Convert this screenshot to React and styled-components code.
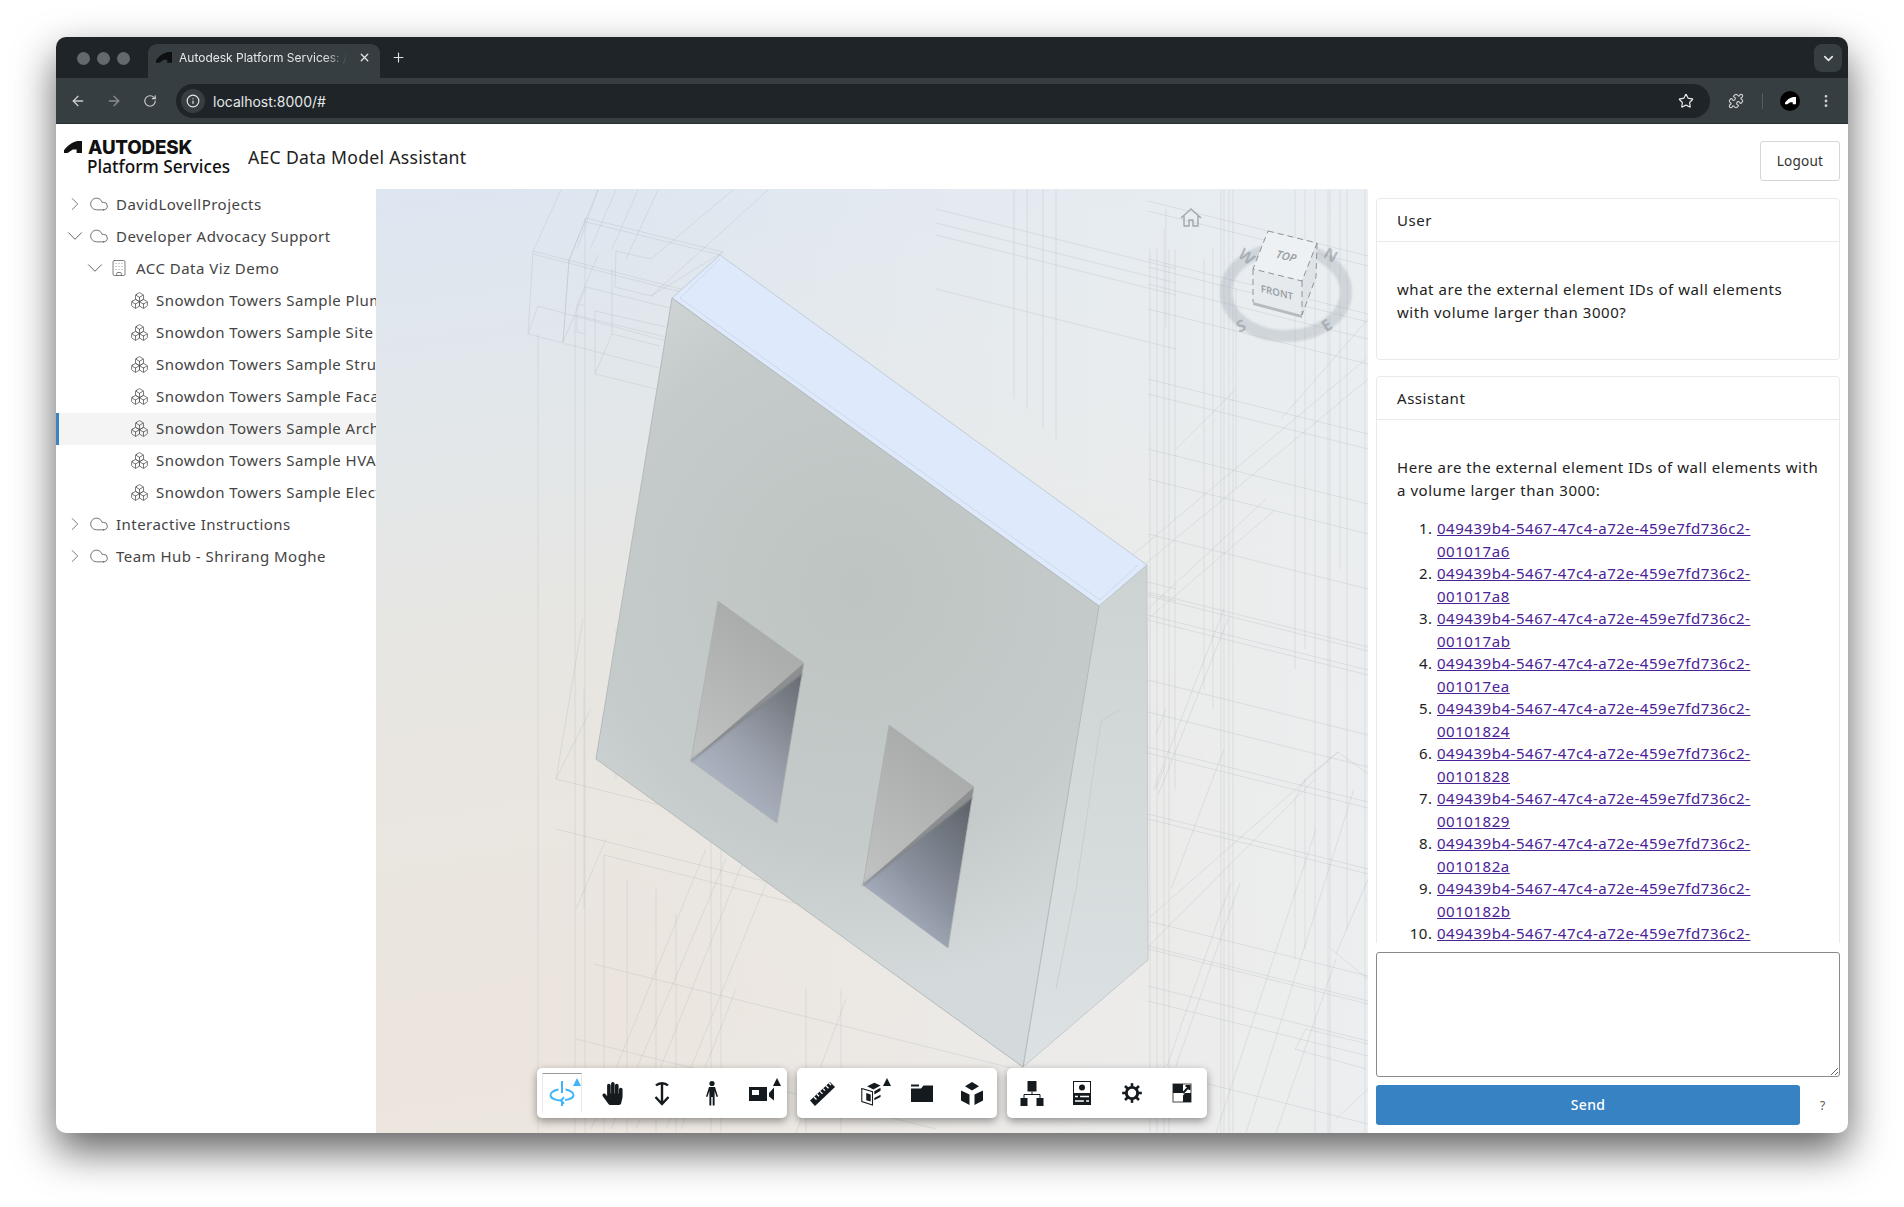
import React from "react"
import styled, { createGlobalStyle } from "styled-components"
import {
  ArrowLeft,
  ArrowRight,
  Boxes,
  Building,
  ChevronDown,
  ChevronRight,
  Cloud,
  Info,
  MoreVertical,
  Plus,
  Puzzle,
  RotateCw,
  Star,
  X,
} from "lucide-react"
import { FaHandPaper } from "react-icons/fa"

const GlobalStyle = createGlobalStyle`
  html, body { margin: 0; padding: 0; background: #fff; }
  body { font-family: "Noto Sans", sans-serif; color: #222; }
  * { box-sizing: border-box; }
`

const Page = styled.div`
  width: 1904px;
  height: 1207px;
  padding: 37px 56px 74px;
  overflow: hidden;
`

const BrowserWindow = styled.div`
  height: 1096px;
  display: flex;
  flex-direction: column;
  border-radius: 10px;
  overflow: hidden;
  background: #fff;
  box-shadow: 0 18px 42px rgba(0, 0, 0, 0.62);
`

const TabStrip = styled.div`
  height: 41px;
  flex: none;
  display: flex;
  align-items: flex-end;
  background: #1e2427;
  padding: 0 6px 0 21px;
`

const Lights = styled.div`
  display: flex;
  gap: 7px;
  align-self: center;
  margin: 1px 18px 0 0;
`

const Light = styled.span`
  width: 13px;
  height: 13px;
  border-radius: 50%;
  background: #63696c;
`

const Tab = styled.div`
  width: 232px;
  height: 34px;
  display: flex;
  align-items: center;
  gap: 7px;
  padding: 0 9px 7px 8px;
  background: #373e41;
  border-radius: 9px 9px 0 0;
  color: #e4e7e8;
`

const TabTitle = styled.span`
  flex: 1;
  overflow: hidden;
  white-space: nowrap;
  font: 400 12px "Inter", sans-serif;
  mask-image: linear-gradient(90deg, #000 84%, transparent 98%);
`

const NewTab = styled.span`
  display: flex;
  align-self: center;
  margin: 0 0 0 11px;
  color: #dfe3e4;
`

const TabMenu = styled.span`
  margin-left: auto;
  align-self: flex-start;
  margin-top: 7px;
  width: 28px;
  height: 28px;
  display: flex;
  align-items: center;
  justify-content: center;
  border-radius: 8px;
  background: #373e41;
  color: #e4e7e8;
`

const AddressBar = styled.div`
  height: 46px;
  flex: none;
  display: flex;
  align-items: center;
  padding: 1px 14px 0 12px;
  background: #373e41;
  border-bottom: 1px solid #2a2f32;
  color: #c9cecf;
`

const NavButton = styled.span`
  width: 20px;
  display: flex;
  justify-content: center;
  margin-right: 16px;
  opacity: ${p => (p.$dim ? 0.55 : 1)};
`

const UrlPill = styled.div`
  width: 1534px;
  height: 34px;
  display: flex;
  align-items: center;
  padding: 0 16px 0 5px;
  border-radius: 17px;
  background: #1e2427;
  color: #e6e8e9;
`

const SiteInfo = styled.span`
  width: 24px;
  height: 24px;
  display: flex;
  align-items: center;
  justify-content: center;
  border-radius: 50%;
  background: #373e41;
`

const UrlText = styled.span`
  flex: 1;
  margin-left: 8px;
  font: 400 14px "Inter", sans-serif;
`

const AddressActions = styled.div`
  display: flex;
  align-items: center;
  flex: 1;
  justify-content: space-between;
  padding: 0 0 0 18px;
`

const Divider = styled.span`
  width: 1px;
  height: 16px;
  background: #555c5f;
`

const Avatar = styled.span`
  width: 20px;
  height: 20px;
  border-radius: 50%;
  background: #000;
  display: flex;
  align-items: center;
  justify-content: center;
`

const AppHeader = styled.header`
  height: 65px;
  flex: none;
  display: flex;
  align-items: center;
  padding: 0 8px 0 8px;
`

const Brand = styled.div`
  display: flex;
  flex-direction: column;
  margin-top: 2px;
  width: 184px;
`

const BrandTop = styled.div`
  display: flex;
  align-items: center;
  gap: 6px;
  height: 17px;
  margin-bottom: 1px;
  font: 800 18.8px/17px "Inter", sans-serif;
  letter-spacing: -0.2px;
  color: #111;
`

const BrandBottom = styled.div`
  margin-left: 23px;
  font: 500 17.2px/19px "Noto Sans", sans-serif;
  color: #111;
  white-space: nowrap;
`

const AppTitle = styled.h1`
  margin: 0;
  font: 400 17.6px "Noto Sans", sans-serif;
  letter-spacing: 0.3px;
  color: #222;
`

const LogoutButton = styled.button`
  margin: 8px 0 0 auto;
  width: 80px;
  height: 40px;
  background: #fff;
  border: 1px solid #d5d6db;
  border-radius: 3px;
  font: 400 13.6px "Noto Sans", sans-serif;
  letter-spacing: 0.2px;
  color: #333;
`

const AppBody = styled.div`
  flex: 1;
  min-height: 0;
  display: flex;
`

const Sidebar = styled.nav`
  width: 320px;
  flex: none;
  overflow: hidden;
`

const TreeRow = styled.div`
  height: 32px;
  display: flex;
  align-items: center;
  padding: 0 0 2px ${p => 11 + p.$level * 20}px;
  white-space: nowrap;
  font-size: 15px;
  letter-spacing: 0.47px;
  color: #444;
  background: ${p => (p.$selected ? "#f4f4f5" : "transparent")};
  box-shadow: ${p => (p.$selected ? "inset 3px 0 0 #3c83c3" : "none")};
`

const Caret = styled.span`
  width: 16px;
  flex: none;
  display: flex;
  justify-content: center;
  margin-right: 4px;
  color: #555;
  svg {
    flex: none;
  }
`

const TreeIcon = styled.span`
  width: 24px;
  flex: none;
  display: flex;
  justify-content: center;
  margin-right: 5px;
  color: #555;
`

const Leaf = styled.span`
  width: 20px;
  flex: none;
`

const Viewer = styled.main`
  width: 992px;
  flex: none;
  position: relative;
  overflow: hidden;
  background:
    linear-gradient(90deg, rgba(236, 240, 243, 0) 25%, rgba(236, 240, 243, 0.8) 100%),
    linear-gradient(172deg, #dde6f1 0%, #e2e7ea 22%, #e8e6e1 46%, #ece5de 80%, #ece7e1 100%);
`

const Scene = styled.svg`
  display: block;
  width: 992px;
  height: 944px;
`

const ToolDock = styled.div`
  position: absolute;
  left: 161px;
  bottom: 15px;
  display: flex;
  gap: 10px;
`

const ToolGroup = styled.div`
  display: flex;
  height: 50px;
  background: #fff;
  border-radius: 5px;
  box-shadow: 0 3px 9px rgba(0, 0, 0, 0.4);
`

const ToolButton = styled.div`
  position: relative;
  width: 40px;
  height: 40px;
  margin: 5px;
  display: flex;
  align-items: center;
  justify-content: center;
  color: ${p => (p.$active ? "#3fb4fb" : "#151a1e")};
  border: 1px solid transparent;
  border-top-color: ${p => (p.$active ? "#9a9a9a" : "transparent")};
  border-left-color: ${p => (p.$active ? "#e8e8e8" : "transparent")};
  border-right-color: ${p => (p.$active ? "#e8e8e8" : "transparent")};
`

const MoreMark = styled.span`
  position: absolute;
  top: 4px;
  right: 0;
  width: 0;
  height: 0;
  border-left: 4px solid transparent;
  border-right: 4px solid transparent;
  border-bottom: 8px solid currentColor;
`

const ChatPanel = styled.aside`
  flex: 1;
  min-width: 0;
  display: flex;
  flex-direction: column;
  padding: 9px 8px 8px;
`

const Messages = styled.div`
  flex: 1;
  min-height: 0;
  overflow: hidden;
  display: flex;
  flex-direction: column;
  gap: 16px;
`

const MessageCard = styled.section`
  flex: none;
  border: 1px solid #e9e9ec;
  border-radius: 4px;
  font-size: 15px;
  letter-spacing: 0.54px;
  line-height: 22.5px;
  color: #222;
`

const CardTitle = styled.div`
  height: 43px;
  display: flex;
  align-items: center;
  padding: 0 20px;
  border-bottom: 1px solid #e9e9ec;
`

const CardBody = styled.div`
  padding: 36px 20px;
`

const Paragraph = styled.p`
  margin: 0;
`

const IdList = styled.ol`
  margin: 16px 0 0;
  padding: 0 30px 0 40px;
`

const IdLink = styled.a`
  color: #4a2296;
  text-decoration: underline;
`

const PromptBox = styled.textarea`
  flex: none;
  display: block;
  width: 100%;
  height: 125px;
  margin-top: 9px;
  border: 1px solid #8a8a8a;
  border-radius: 3px;
  background: #fff;
`

const SendRow = styled.div`
  flex: none;
  display: flex;
  align-items: center;
  height: 40px;
  margin-top: 8px;
`

const SendButton = styled.button`
  width: 424px;
  height: 40px;
  padding: 0 0 2px;
  border: 0;
  border-radius: 3px;
  background: #3682c2;
  color: #fff;
  font: 500 14px "Noto Sans", sans-serif;
  letter-spacing: 0.3px;
`

const HelpMark = styled.span`
  margin-left: 20px;
  font-size: 12px;
  color: #555;
`

const AutodeskMark = ({ size = 18, color = "#111" }) => (
  <svg width={size} height={size * 0.67} viewBox="0 0 18 12">
    <path fill={color} d="M0 12V9.2C3 5 8 1.2 13.5 0H18V12H12.6V8.6H8.8L3.6 12Z" />
  </svg>
)

const iconProps = { width: 28, height: 28, viewBox: "0 0 28 28" }

const OrbitIcon = () => (
  <svg {...iconProps} fill="none" stroke="currentColor" strokeWidth="2">
    <path d="M14 2V14M14 22V27" />
    <path d="M10.5 10.5C5 11.5 2 14 2.5 16.5C3 19.5 8 21.5 13 21.5" />
    <path d="M17.5 10.5C23 11.5 26 14 25.5 16.5C25 19 21 20.5 17 21" />
    <path d="M16 18.2L13 21.5L16 24.6" />
  </svg>
)

const DollyIcon = () => (
  <svg {...iconProps} fill="none" stroke="currentColor" strokeWidth="2.4">
    <path d="M14 4V25M8 6.5C11 3.5 17 3.5 20 6.5M7.5 18L14 25L20.5 18" />
  </svg>
)

const WalkIcon = () => (
  <svg {...iconProps} fill="currentColor">
    <circle cx="14" cy="4.5" r="2.6" />
    <path d="M11 8H17L20 17.5L18.6 18L16.6 12V26.5H14.7V18H13.3V26.5H11.4V12L9.4 18L8 17.5Z" />
  </svg>
)

const CameraIcon = () => (
  <svg {...iconProps} fill="currentColor">
    <path fillRule="evenodd" d="M1 8H19V22H1ZM4 11V16H11V11Z" />
    <path d="M21 14L26 8.5V21.5L21 17.5Z" />
  </svg>
)

const RulerIcon = () => (
  <svg {...iconProps}>
    <path fill="currentColor" d="M2 21.5L22 3L27 8L7 27Z" />
    <path
      stroke="#fff"
      strokeWidth="1.3"
      d="M6 18L8.5 20.5M9 15.2L11 17.2M12 12.4L14.5 14.9M15 9.6L17 11.6M18 6.8L20.5 9.3M21 4L23 6"
    />
  </svg>
)

const SectionIcon = () => (
  <svg width="25" height="25" viewBox="0 0 28 28">
    <path fill="none" stroke="currentColor" strokeWidth="1.2" d="M2 8.5L14 12V27L2 23Z" />
    <path fill="currentColor" d="M7 13.5L12 15V23L7 21.5Z" />
    <path fill="currentColor" d="M8 6L16 2L23 5L15 9.5Z" />
    <path fill="currentColor" d="M16 11.5L23 7.5V11L16 15ZM16 19L23 15.5V18L16 21.5Z" />
  </svg>
)

const FolderIcon = () => (
  <svg {...iconProps} fill="currentColor">
    <path d="M3 5.5H11V7.5H3Z" />
    <path d="M3 9.5H13L15.5 6.5H25V23H3Z" />
  </svg>
)

const ExplodeIcon = () => (
  <svg {...iconProps} fill="currentColor">
    <path d="M14 3L21 7.2L14 11.4L7 7.2Z" />
    <path d="M3 11.5L11.5 15.5V26L3 21.5Z" />
    <path d="M25 11.5L16.5 15.5V26L25 21.5Z" />
  </svg>
)

const TreeViewIcon = () => (
  <svg {...iconProps} fill="currentColor">
    <rect x="9.5" y="2" width="9" height="10.5" />
    <rect x="2.5" y="19" width="7" height="8" />
    <rect x="18.5" y="19" width="7" height="8" />
    <path fill="none" stroke="currentColor" d="M14 12.5V15.5M6 19V15.5H22V19" />
  </svg>
)

const PropertiesIcon = () => (
  <svg {...iconProps}>
    <rect x="5.5" y="2.5" width="17" height="23" fill="none" stroke="currentColor" />
    <circle cx="14" cy="8.5" r="3" fill="currentColor" />
    <rect x="5.5" y="14" width="17" height="11.5" fill="currentColor" />
    <path stroke="#fff" strokeWidth="1.3" d="M7 17.5H21M7 22H21" />
    <path stroke="#151a1e" strokeWidth="2.2" d="M11 16V19M17 20.5V23.5" />
  </svg>
)

const GearIcon = () => (
  <svg width="24" height="24" viewBox="0 0 28 28" fill="none" stroke="currentColor">
    <circle cx="14" cy="14" r="6.6" strokeWidth="3.4" />
    {[0, 45, 90, 135, 180, 225, 270, 315].map(angle => (
      <path key={angle} d="M14 2.5V7" strokeWidth="3" transform={`rotate(${angle} 14 14)`} />
    ))}
  </svg>
)

const FullscreenIcon = () => (
  <svg {...iconProps}>
    <rect x="5" y="5" width="18" height="18" fill="#fff" stroke="#444" />
    <path fill="currentColor" d="M5 5H15V14H5ZM15 14H23V23H15Z" />
    <path fill="none" stroke="#fff" strokeWidth="2" d="M11 19L16 14" />
    <path fill="none" stroke="currentColor" strokeWidth="2" d="M15 14L21.5 7M17.5 7H21.5V11" />
  </svg>
)

// faint wireframe of the rest of the building behind the selected wall
const floorLine = (x, y, len = 220) => [x, y, x + len, y + len * 0.25]
const wireLines = [
  // roof beam and boxes, upper left
  [210, 29, 347, 63], [210, 33, 345, 66], [157, 62, 328, 106], [157, 65, 328, 109],
  [193, 71, 210, 29], [157, 62, 185, 1], [193, 71, 222, 1], [157, 62, 152, 145],
  [152, 145, 283, 179], [162, 117, 294, 153], [162, 117, 152, 145], [199, 126, 290, 148],
  [219, 122, 219, 185], [219, 185, 280, 200], [219, 122, 290, 138], [236, 145, 284, 157],
  [236, 145, 219, 185], [236, 80, 236, 145], [240, 62, 239, 98], [239, 98, 275, 107],
  [275, 107, 347, 63], [240, 62, 275, 70], [275, 70, 357, 1], [201, 116, 209, 116],
  [201, 116, 201, 143], [201, 143, 209, 145], [201, 116, 222, 66], [210, 98, 294, 119],
  [210, 98, 187, 153], [187, 153, 193, 71], [275, 107, 392, 1], [222, 1, 201, 60],
  [240, 1, 214, 60], [262, 1, 236, 60], [282, 1, 250, 70],
  // tall verticals on the left
  [162, 145, 162, 944], [199, 126, 199, 944], [209, 29, 209, 944], [193, 71, 187, 153],
  [240, 440, 240, 590], [292, 430, 292, 620],
  // verticals above and right of the wall
  [638, 1, 638, 210], [651, 1, 651, 220], [667, 1, 667, 240], [680, 1, 680, 250],
  [774, 60, 774, 944], [781, 60, 781, 944], [788, 40, 788, 944], [793, 60, 793, 944],
  [799, 60, 799, 600], [828, 70, 828, 500], [837, 60, 837, 520], [845, 1, 845, 944],
  [848, 1, 848, 944], [853, 1, 853, 944], [857, 1, 857, 944], [919, 1, 919, 480],
  [929, 1, 929, 460], [919, 610, 919, 770], [929, 590, 929, 760], [939, 1, 939, 944],
  [952, 1, 952, 944], [954, 1, 954, 944], [964, 1, 964, 380], [971, 1, 971, 500],
  [971, 500, 971, 740], [989, 1, 989, 944], [790, 20, 790, 140], [860, 100, 860, 300],
  // floor plates, right side
  ...[
    12, 22, 70, 78, 95, 120, 190, 205, 260, 290, 345, 403, 407, 426, 431, 491, 523, 558, 564,
    625, 630, 732, 757, 760, 797, 812, 880,
  ].map(y => floorLine(772, y)),
  ...[20, 34, 46, 100, 340, 352].map(y => floorLine(560, y, 240)),
  // plan diagonals, right side
  [773, 757, 939, 590], [774, 728, 962, 563], [772, 430, 900, 320], [772, 420, 890, 310],
  [740, 380, 990, 170], [745, 395, 992, 190], [905, 230, 992, 130], [800, 260, 860, 200],
  [791, 877, 855, 694], [800, 877, 864, 694], [840, 944, 940, 640], [870, 944, 978, 600],
  [900, 944, 960, 770], [960, 765, 992, 690], [955, 760, 992, 790], [919, 610, 929, 590],
  [929, 590, 962, 563], [962, 563, 992, 585], [960, 930, 992, 900], [919, 860, 930, 840],
  [919, 860, 990, 880], [930, 840, 992, 855], [780, 545, 790, 520], [780, 600, 790, 575],
  [795, 700, 848, 560], [778, 600, 848, 420], [782, 606, 852, 430],
  // below the wall, lower left
  [180, 590, 640, 705], [180, 640, 640, 755], [228, 666, 640, 770], [218, 775, 640, 880],
  [200, 850, 560, 940], [228, 666, 228, 944], [251, 690, 251, 944], [280, 700, 280, 944],
  [300, 725, 300, 944], [335, 620, 335, 944], [345, 640, 345, 944], [430, 800, 430, 944],
  [465, 800, 465, 944], [215, 940, 330, 660], [235, 940, 350, 670], [260, 940, 380, 640],
  [290, 940, 400, 670], [305, 940, 360, 800], [420, 944, 470, 810], [180, 590, 215, 520],
  [200, 720, 230, 650], [207, 430, 180, 590], [208, 500, 208, 720],
]

const Wireframe = () => (
  <g stroke="#aab1b5" strokeWidth="0.8" strokeOpacity="0.32" fill="none">
    {wireLines.map(([x1, y1, x2, y2], i) => (
      <line key={i} x1={x1} y1={y1} x2={x2} y2={y2} />
    ))}
  </g>
)

const Opening = ({ a, b, c, d, lower }) => {
  const mid = [b[0] - 2, b[1] + 11]
  return (
    <g>
      <polygon points={`${a} ${b} ${c} ${d}`} fill="#8d8f91" />
      <polygon points={`${a} ${b} ${d}`} fill="url(#openingUpper)" />
      <polygon points={`${d} ${mid} ${c}`} fill={`url(#${lower})`} />
      <polygon points={`${a} ${b} ${c} ${d}`} fill="none" stroke="#b0b5b5" strokeWidth="0.8" />
      <line x1={d[0]} y1={d[1]} x2={mid[0]} y2={mid[1]} stroke="#7d8186" strokeWidth="1.2" filter="url(#soft)" />
    </g>
  )
}

const NavCube = () => (
  <g>
    <ellipse
      cx="910"
      cy="103"
      rx="60"
      ry="44"
      fill="none"
      stroke="#98a3aa"
      strokeOpacity="0.32"
      strokeWidth="12"
      filter="url(#soft)"
    />
    <path d="M892 42 L941 54 L926 92 L877 80Z" fill="#eef1f4" />
    <path d="M877 80 L926 92 L926 126 L877 113Z" fill="#e7eaed" />
    <path d="M926 92 L941 54 L940 88 L926 126Z" fill="#dfe3e7" />
    <path d="M877 113 L926 126 L926 129 L877 116Z" fill="#b5bbc0" />
    <g fill="none" stroke="#8c9499" strokeWidth="1" strokeDasharray="6 4">
      <path d="M892 42 L941 54 L926 92 L877 80Z" />
      <path d="M877 80 V113 M926 92 V126 M941 54 L940 88 L926 126" />
    </g>
    <g fontFamily="Noto Sans, sans-serif" fontWeight="600" fill="#9aa2a8" textAnchor="middle">
      <text transform="matrix(0.97 0.24 -0.3 0.95 909 71)" fontSize="11" fontStyle="italic">TOP</text>
      <text transform="matrix(0.97 0.24 0 1 901 107)" fontSize="10">FRONT</text>
      <g fontSize="16" fontWeight="700" fill="#8f989e" fillOpacity="0.6">
        <text transform="translate(867 72) rotate(38)">W</text>
        <text transform="translate(952 71) rotate(30)">N</text>
        <text transform="translate(867 142) rotate(-22)">S</text>
        <text transform="translate(954 141) rotate(-35)">E</text>
      </g>
    </g>
    <path
      d="M805 29L815 20L825 29M808 27V37H813V31H817V37H822V27"
      fill="none"
      stroke="#a0a7ac"
      strokeWidth="1.4"
      strokeLinejoin="round"
    />
  </g>
)

const ViewerScene = () => (
  <Scene viewBox="0 0 992 944">
    <defs>
      <filter id="soft">
        <feGaussianBlur stdDeviation="1" />
      </filter>
      <radialGradient id="wallFront" gradientUnits="userSpaceOnUse" cx="480" cy="400" r="400">
        <stop offset="0" stopColor="#bec4c2" />
        <stop offset="0.65" stopColor="#c5cbca" />
        <stop offset="1" stopColor="#d4dadb" />
      </radialGradient>
      <linearGradient id="wallSide" x1="0" y1="0" x2="0" y2="1">
        <stop offset="0" stopColor="#cdd3d3" />
        <stop offset="1" stopColor="#dce2e3" />
      </linearGradient>
      <linearGradient id="openingUpper" x1="0.7" y1="0" x2="0.2" y2="1">
        <stop offset="0" stopColor="#a6a8a8" />
        <stop offset="1" stopColor="#bfc1c0" />
      </linearGradient>
      <linearGradient id="openingLowerA" x1="1" y1="0" x2="0.3" y2="1">
        <stop offset="0" stopColor="#666b71" />
        <stop offset="0.55" stopColor="#9aa0ab" />
        <stop offset="1" stopColor="#b4bccb" />
      </linearGradient>
      <linearGradient id="openingLowerB" x1="1" y1="0" x2="0.3" y2="1">
        <stop offset="0" stopColor="#5c6167" />
        <stop offset="0.6" stopColor="#8b929f" />
        <stop offset="1" stopColor="#b0b8c8" />
      </linearGradient>
    </defs>
    <Wireframe />
    <polygon points="344,66 296,109 723,417 771,376" fill="#deeafb" stroke="#c3ccd6" strokeWidth="1" />
    <polyline points="344,70 304,109 724,411 762,376" fill="none" stroke="#c9d5e6" strokeWidth="0.8" />
    <polygon points="723,417 771,376 772,771 647,878" fill="url(#wallSide)" stroke="#bcc3c5" strokeWidth="0.8" />
    <polygon points="296,109 723,417 647,878 220,570" fill="url(#wallFront)" stroke="#b4babb" strokeWidth="1" />
    <polyline points="745,520 725,532 700,700 680,800" fill="none" stroke="#c4caca" strokeWidth="0.8" />
    <Opening a={[342, 412]} b={[428, 474]} c={[401, 634]} d={[315, 572]} lower="openingLowerA" />
    <Opening a={[513, 536]} b={[598, 598]} c={[572, 759]} d={[487, 696]} lower="openingLowerB" />
    <NavCube />
  </Scene>
)

const tools = [
  [
    { icon: <OrbitIcon />, active: true, more: true },
    { icon: <FaHandPaper size={23} /> },
    { icon: <DollyIcon /> },
    { icon: <WalkIcon /> },
    { icon: <CameraIcon />, more: true },
  ],
  [
    { icon: <RulerIcon /> },
    { icon: <SectionIcon />, more: true },
    { icon: <FolderIcon /> },
    { icon: <ExplodeIcon /> },
  ],
  [
    { icon: <TreeViewIcon /> },
    { icon: <PropertiesIcon /> },
    { icon: <GearIcon /> },
    { icon: <FullscreenIcon /> },
  ],
]

const tree = [
  { level: 0, name: "DavidLovellProjects", kind: "hub" },
  { level: 0, name: "Developer Advocacy Support", kind: "hub", open: true },
  { level: 1, name: "ACC Data Viz Demo", kind: "project", open: true },
  { level: 2, name: "Snowdon Towers Sample Plumbing", kind: "model" },
  { level: 2, name: "Snowdon Towers Sample Site", kind: "model" },
  { level: 2, name: "Snowdon Towers Sample Structural", kind: "model" },
  { level: 2, name: "Snowdon Towers Sample Facades", kind: "model" },
  { level: 2, name: "Snowdon Towers Sample Architectural", kind: "model", selected: true },
  { level: 2, name: "Snowdon Towers Sample HVAC", kind: "model" },
  { level: 2, name: "Snowdon Towers Sample Electrical", kind: "model" },
  { level: 0, name: "Interactive Instructions", kind: "hub" },
  { level: 0, name: "Team Hub - Shrirang Moghe", kind: "hub" },
]

const elementIds = ["001017a6", "001017a8", "001017ab", "001017ea", "00101824", "00101828", "00101829", "0010182a", "0010182b", "0010182c"]

const TreeItem = ({ level, name, kind, open, selected }) => {
  const Chevron = open ? ChevronDown : ChevronRight
  return (
    <TreeRow $level={level} $selected={selected}>
      {kind === "model" ? (
        <Leaf />
      ) : (
        <Caret>
          <Chevron size={open ? 26 : 22} strokeWidth={0.85} />
        </Caret>
      )}
      <TreeIcon>
        {kind === "hub" && <Cloud size={20} strokeWidth={1} />}
        {kind === "project" && <Building size={18} strokeWidth={1} />}
        {kind === "model" && <Boxes size={19} strokeWidth={1} />}
      </TreeIcon>
      {name}
    </TreeRow>
  )
}

const App = () => (
  <Page>
    <GlobalStyle />
    <BrowserWindow>
      <TabStrip>
        <Lights>
          <Light />
          <Light />
          <Light />
        </Lights>
        <Tab>
          <AutodeskMark size={16} color="#0e1011" />
          <TabTitle>Autodesk Platform Services: / AEC</TabTitle>
          <X size={13} strokeWidth={2.4} />
        </Tab>
        <NewTab>
          <Plus size={15} strokeWidth={1.8} />
        </NewTab>
        <TabMenu>
          <ChevronDown size={15} strokeWidth={2.6} />
        </TabMenu>
      </TabStrip>
      <AddressBar>
        <NavButton>
          <ArrowLeft size={16} />
        </NavButton>
        <NavButton $dim>
          <ArrowRight size={16} />
        </NavButton>
        <NavButton>
          <RotateCw size={14} />
        </NavButton>
        <UrlPill>
          <SiteInfo>
            <Info size={14} />
          </SiteInfo>
          <UrlText>localhost:8000/#</UrlText>
          <Star size={16} strokeWidth={1.8} />
        </UrlPill>
        <AddressActions>
          <Puzzle size={16} strokeWidth={1.7} />
          <Divider />
          <Avatar>
            <AutodeskMark size={11} color="#fff" />
          </Avatar>
          <MoreVertical size={16} strokeWidth={2.2} />
        </AddressActions>
      </AddressBar>
      <AppHeader>
        <Brand>
          <BrandTop>
            <AutodeskMark />
            AUTODESK
          </BrandTop>
          <BrandBottom>Platform Services</BrandBottom>
        </Brand>
        <AppTitle>AEC Data Model Assistant</AppTitle>
        <LogoutButton>Logout</LogoutButton>
      </AppHeader>
      <AppBody>
        <Sidebar>
          {tree.map(item => (
            <TreeItem key={item.name} {...item} />
          ))}
        </Sidebar>
        <Viewer>
          <ViewerScene />
          <ToolDock>
            {tools.map((group, g) => (
              <ToolGroup key={g}>
                {group.map((tool, t) => (
                  <ToolButton key={t} $active={tool.active}>
                    {tool.icon}
                    {tool.more && <MoreMark />}
                  </ToolButton>
                ))}
              </ToolGroup>
            ))}
          </ToolDock>
        </Viewer>
        <ChatPanel>
          <Messages>
            <MessageCard>
              <CardTitle>User</CardTitle>
              <CardBody>
                <Paragraph>
                  what are the external element IDs of wall elements
                  <br />
                  with volume larger than 3000?
                </Paragraph>
              </CardBody>
            </MessageCard>
            <MessageCard>
              <CardTitle>Assistant</CardTitle>
              <CardBody>
                <Paragraph>
                  Here are the external element IDs of wall elements with
                  <br />
                  a volume larger than 3000:
                </Paragraph>
                <IdList>
                  {elementIds.map(id => (
                    <li key={id}>
                      <IdLink href="#">049439b4-5467-47c4-a72e-459e7fd736c2-{id}</IdLink>
                    </li>
                  ))}
                </IdList>
              </CardBody>
            </MessageCard>
          </Messages>
          <PromptBox />
          <SendRow>
            <SendButton>Send</SendButton>
            <HelpMark>?</HelpMark>
          </SendRow>
        </ChatPanel>
      </AppBody>
    </BrowserWindow>
  </Page>
)

export default App
